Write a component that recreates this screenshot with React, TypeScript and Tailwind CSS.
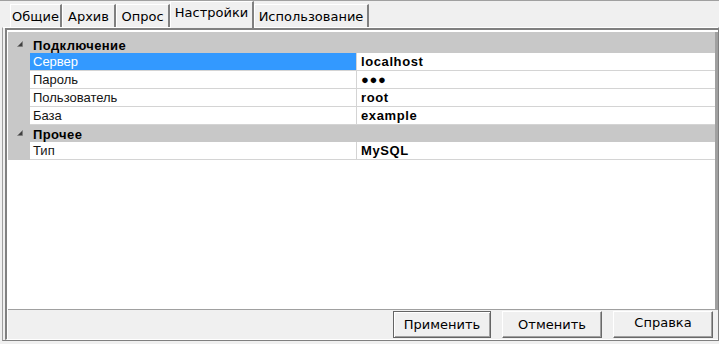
import React from "react";

type Row = { label: string; value: string; selected?: boolean };
type Group = { title: string; rows: Row[]; first?: boolean };

const groups: Group[] = [
  {
    title: "Подключение",
    first: true,
    rows: [
      { label: "Сервер", value: "localhost", selected: true },
      { label: "Пароль", value: "●●●" },
      { label: "Пользователь", value: "root" },
      { label: "База", value: "example" },
    ],
  },
  { title: "Прочее", rows: [{ label: "Тип", value: "MySQL" }] },
];

const tabs = [
  { name: "Общие", w: "w-[52px]" },
  { name: "Архив", w: "w-[54px]" },
  { name: "Опрос", w: "w-[54px]" },
  { name: "Настройки", w: "w-[84px]", active: true },
  { name: "Использование", w: "w-[115px]" },
];

const Triangle = () => (
  <svg width="6" height="6" viewBox="0 0 6 6" className="block">
    <polygon points="5.5,0.5 5.5,5.5 0.5,5.5" fill="#404040" stroke="#7a7a7a" strokeWidth="0.6" />
  </svg>
);

const App = () => {
  return (
    <div className="w-[719px] h-[344px] bg-[#f0f0f0] border-t border-[#a0a0a0] flex flex-col overflow-hidden font-['DejaVu_Sans',sans-serif] text-[13px] text-black">
      {/* tabs */}
      <div className="h-[26px] pl-[10px] flex items-end">
        {tabs.map((t) =>
          t.active ? (
            <div
              key={t.name}
              className={`${t.w} h-[27px] -mb-[1px] relative z-10 bg-[#f0f0f0] border-l border-t border-white border-r-2 border-r-[#808080] flex items-start justify-center pt-[2px] leading-[18px]`}
            >
              {t.name}
            </div>
          ) : (
            <div
              key={t.name}
              className={`${t.w} h-[23px] bg-[#f0f0f0] border-l border-t border-white border-r-2 border-r-[#808080] flex items-center justify-center pt-[1px] leading-[18px]`}
            >
              {t.name}
            </div>
          )
        )}
      </div>

      {/* panel */}
      <div className="flex-1 ml-[2px] mb-[3px] border-l border-t border-l-[#a0a0a0] border-t-white border-r border-r-[#808080] border-b border-b-[#808080] pl-[2px] flex flex-col">
        <div className="flex-1 border-l-2 border-t-2 border-[#808080] border-b border-b-white flex flex-col bg-white">
          <div className="flex-1 flex flex-col pl-[1px] pt-[2px] bg-white">
            <div className="flex-1 flex flex-col border-r-[3px] border-[#a0a0a0] font-['Liberation_Sans',Arial,sans-serif]">
              <div className="h-[4px] bg-[#c8c8c8]" />
              {groups.map((g) => (
                <div key={g.title} className="flex flex-col">
                  <div className={`${g.first ? "h-[17px]" : "h-[17px]"} bg-[#c8c8c8] flex items-center`}>
                    <div className="w-[22px] pl-[9px] pb-[2px] flex items-center">
                      <Triangle />
                    </div>
                    <div className="pl-[3px] pt-[1px] font-bold tracking-[0.4px] leading-none">{g.title}</div>
                  </div>
                  {g.rows.map((r) => (
                    <div key={r.label} className="h-[18px] flex">
                      <div className="w-[22px] bg-[#c8c8c8]" />
                      <div
                        className={`w-[327px] border-r border-b border-[#d4d4d4] pl-[3px] pt-[2px] leading-none ${
                          r.selected ? "bg-[#3399ff] text-white" : "text-[#141414]"
                        }`}
                      >
                        {r.label}
                      </div>
                      <div className="flex-1 border-b border-[#d4d4d4] pl-[4px] pt-[2px] leading-none font-bold tracking-[0.6px]">
                        {r.value}
                      </div>
                    </div>
                  ))}
                </div>
              ))}
              <div className="flex-1" />
            </div>
            {/* buttons */}
            <div className="h-[30px] bg-[#f0f0f0] border-t border-[#a0a0a0] flex justify-end items-start pt-[1px] pr-[5px] gap-[11px]">
              <button className="w-[98px] h-[27px] border border-[#646464] bg-[#f0f0f0] shadow-[inset_1px_1px_0_#ffffff,inset_-1px_-1px_0_#a0a0a0] flex items-center justify-center pt-[1px]">
                Применить
              </button>
              <button className="w-[100px] h-[27px] border-l border-t border-white border-r border-b border-r-[#696969] border-b-[#696969] bg-[#f0f0f0] shadow-[inset_-1px_-1px_0_#a0a0a0] flex items-center justify-center pt-[1px]">
                Отменить
              </button>
              <button className="w-[100px] h-[27px] border-l border-t border-white border-r border-b border-r-[#696969] border-b-[#696969] bg-[#f0f0f0] shadow-[inset_-1px_-1px_0_#a0a0a0] flex items-center justify-center pb-[3px]">
                Справка
              </button>
            </div>
          </div>
        </div>
      </div>
    </div>
  );
};

export default App;
